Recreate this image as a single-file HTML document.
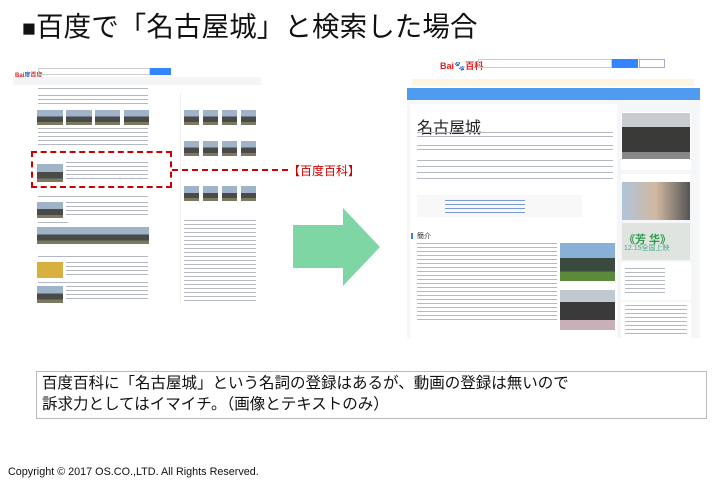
<!DOCTYPE html>
<html><head><meta charset="utf-8"><style>
*{margin:0;padding:0;box-sizing:border-box}
body{width:720px;height:485px;background:#fff;position:relative;overflow:hidden;font-family:"Liberation Sans","Noto Sans CJK JP",sans-serif}
.a{position:absolute}
.ln{position:absolute;background:repeating-linear-gradient(#b5b8c0 0 1px,transparent 1px 4px)}
.img{position:absolute;background:linear-gradient(#9fb4c8 0 45%,#4a4a48 45% 80%,#7a7a60 80%)}
.red{color:#c00}
</style></head><body>
<div class="a" style="left:22px;top:4px;font-size:27.5px;color:#111;letter-spacing:0.1px;white-space:nowrap"><span style="font-size:23px">■</span>百度で「名古屋城」と検索した場合</div>

<!-- left screenshot -->
<div class="a" style="left:15px;top:70px;font-size:6px;font-weight:bold;color:#d22">Bai<span style="color:#2457c5">度</span>百度</div>
<div class="a" style="left:38px;top:68px;width:112px;height:7px;border:1px solid #ccc"></div>
<div class="a" style="left:150px;top:68px;width:21px;height:7px;background:#3385ff"></div>
<div class="a" style="left:13px;top:77px;width:248px;height:8px;background:#f4f5f7"></div>
<div class="ln" style="left:38px;top:88px;width:110px;height:4px"></div>
<div class="ln" style="left:38px;top:95px;width:110px;height:10px"></div>
<div class="img" style="left:37px;top:110px;width:26px;height:15px"></div>
<div class="img" style="left:66px;top:110px;width:26px;height:15px"></div>
<div class="img" style="left:95px;top:110px;width:25px;height:15px"></div>
<div class="img" style="left:124px;top:110px;width:25px;height:15px"></div>
<div class="ln" style="left:38px;top:128px;width:110px;height:20px"></div>
<div class="img" style="left:37px;top:164px;width:26px;height:18px"></div>
<div class="ln" style="left:66px;top:162px;width:82px;height:20px"></div>
<div class="ln" style="left:38px;top:196px;width:110px;height:4px"></div>
<div class="img" style="left:37px;top:202px;width:26px;height:16px"></div>
<div class="ln" style="left:66px;top:202px;width:82px;height:16px"></div>
<div class="ln" style="left:38px;top:222px;width:30px;height:4px"></div>
<div class="img" style="left:37px;top:227px;width:112px;height:17px"></div>
<div class="ln" style="left:38px;top:256px;width:110px;height:4px"></div>
<div class="a" style="left:37px;top:262px;width:26px;height:16px;background:#d8b040"></div>
<div class="ln" style="left:66px;top:262px;width:82px;height:16px"></div>
<div class="ln" style="left:38px;top:282px;width:110px;height:4px"></div>
<div class="img" style="left:37px;top:286px;width:26px;height:17px"></div>
<div class="ln" style="left:66px;top:286px;width:82px;height:16px"></div>
<div class="a" style="left:180px;top:93px;width:78px;height:210px;border-left:1px solid #eee"></div>
<div class="img" style="left:184px;top:110px;width:15px;height:15px"></div>
<div class="img" style="left:203px;top:110px;width:15px;height:15px"></div>
<div class="img" style="left:222px;top:110px;width:15px;height:15px"></div>
<div class="img" style="left:241px;top:110px;width:15px;height:15px"></div>
<div class="img" style="left:184px;top:141px;width:15px;height:15px"></div>
<div class="img" style="left:203px;top:141px;width:15px;height:15px"></div>
<div class="img" style="left:222px;top:141px;width:15px;height:15px"></div>
<div class="img" style="left:241px;top:141px;width:15px;height:15px"></div>
<div class="img" style="left:184px;top:186px;width:15px;height:15px"></div>
<div class="img" style="left:203px;top:186px;width:15px;height:15px"></div>
<div class="img" style="left:222px;top:186px;width:15px;height:15px"></div>
<div class="img" style="left:241px;top:186px;width:15px;height:15px"></div>
<div class="ln" style="left:184px;top:220px;width:72px;height:82px"></div>

<div class="a" style="left:31px;top:151px;width:141px;height:37px;border:2px dashed #c00"></div>
<div class="a" style="left:172px;top:169px;width:116px;border-top:2px dashed #c00"></div>
<div class="a red" style="left:288px;top:162px;font-size:12px;white-space:nowrap">【百度百科】</div>

<!-- arrow -->
<svg class="a" style="left:293px;top:208px" width="90" height="80"><polygon points="0,17 50,17 50,0 87,39 50,78 50,60 0,60" fill="#7fd6a5"/></svg>

<!-- right screenshot -->
<div class="a" style="left:440px;top:59px;font-size:9px;font-weight:bold;color:#e02020;white-space:nowrap">Bai<span style="color:#2457c5">🐾</span>百科</div>
<div class="a" style="left:478px;top:59px;width:134px;height:9px;border:1px solid #ccc"></div>
<div class="a" style="left:612px;top:59px;width:26px;height:9px;background:#3385ff"></div>
<div class="a" style="left:639px;top:59px;width:26px;height:9px;border:1px solid #aac"></div>
<div class="a" style="left:412px;top:79px;width:282px;height:7px;background:#fcf6e0"></div>
<div class="a" style="left:407px;top:88px;width:293px;height:12px;background:#4f9bef"></div>
<div class="a" style="left:407px;top:100px;width:293px;height:238px;background:#f5f6f8"></div>
<div class="a" style="left:410px;top:104px;width:207px;height:234px;background:#fff"></div>
<div class="a" style="left:417px;top:114px;font-size:16px;color:#222;white-space:nowrap">名古屋城</div>
<div class="ln" style="left:417px;top:132px;width:196px;height:7px"></div>
<div class="ln" style="left:417px;top:145px;width:196px;height:7px"></div>
<div class="ln" style="left:417px;top:160px;width:196px;height:22px;background:repeating-linear-gradient(#b5b8c0 0 1px,transparent 1px 6px)"></div>
<div class="a" style="left:417px;top:195px;width:165px;height:22px;background:#f8f8f8"></div>
<div class="ln" style="left:445px;top:200px;width:80px;height:14px;background:repeating-linear-gradient(#7a9ad0 0 1px,transparent 1px 4px)"></div>
<div class="a" style="left:411px;top:233px;width:2px;height:6px;background:#3a7ee0"></div>
<div class="a" style="left:417px;top:231px;font-size:7px;color:#333">簡介</div>
<div class="ln" style="left:417px;top:243px;width:140px;height:80px"></div>
<div class="img" style="left:560px;top:243px;width:55px;height:38px;background:linear-gradient(#8ab0d8 0 40%,#3a4a40 40% 75%,#5a8a3a 75%)"></div>
<div class="img" style="left:560px;top:290px;width:55px;height:40px;background:linear-gradient(#c0c8d0 0 30%,#3a3a3a 30% 75%,#c8b0b8 75%)"></div>
<div class="a" style="left:621px;top:112px;width:70px;height:58px;background:#fff"></div>
<div class="img" style="left:622px;top:113px;width:68px;height:46px;background:linear-gradient(#c8ccd0 0 30%,#3a3a38 30% 85%,#888 85%)"></div>
<div class="a" style="left:621px;top:174px;width:70px;height:10px;background:#fff"></div>
<div class="a" style="left:622px;top:182px;width:68px;height:38px;background:linear-gradient(90deg,#b0c4d8,#d0b8a0 50%,#555)"></div>
<div class="a" style="left:622px;top:223px;width:68px;height:37px;background:#e0e4e0"></div>
<div class="a" style="left:624px;top:231px;font-size:11px;font-weight:bold;color:#2a9a4a;white-space:nowrap">《芳 华》</div>
<div class="a" style="left:624px;top:243px;font-size:7px;color:#4a8;white-space:nowrap">12.15全国上映</div>
<div class="a" style="left:621px;top:262px;width:70px;height:38px;background:#fff"></div>
<div class="ln" style="left:625px;top:268px;width:40px;height:28px"></div>
<div class="a" style="left:621px;top:302px;width:70px;height:36px;background:#fff"></div>
<div class="ln" style="left:625px;top:305px;width:62px;height:32px"></div>

<!-- bottom box -->
<div class="a" style="left:36px;top:371px;width:671px;height:48px;border:1px solid #bbb"></div>
<div class="a" style="left:42px;top:373px;font-size:15.5px;line-height:21px;color:#111;white-space:nowrap">百度百科に「名古屋城」という名詞の登録はあるが、動画の登録は無いので<br>訴求力としてはイマイチ。（画像とテキストのみ）</div>
<div class="a" style="left:8px;top:466px;font-size:10.8px;color:#111;white-space:nowrap">Copyright © 2017 OS.CO.,LTD. All Rights Reserved.</div>
</body></html>
